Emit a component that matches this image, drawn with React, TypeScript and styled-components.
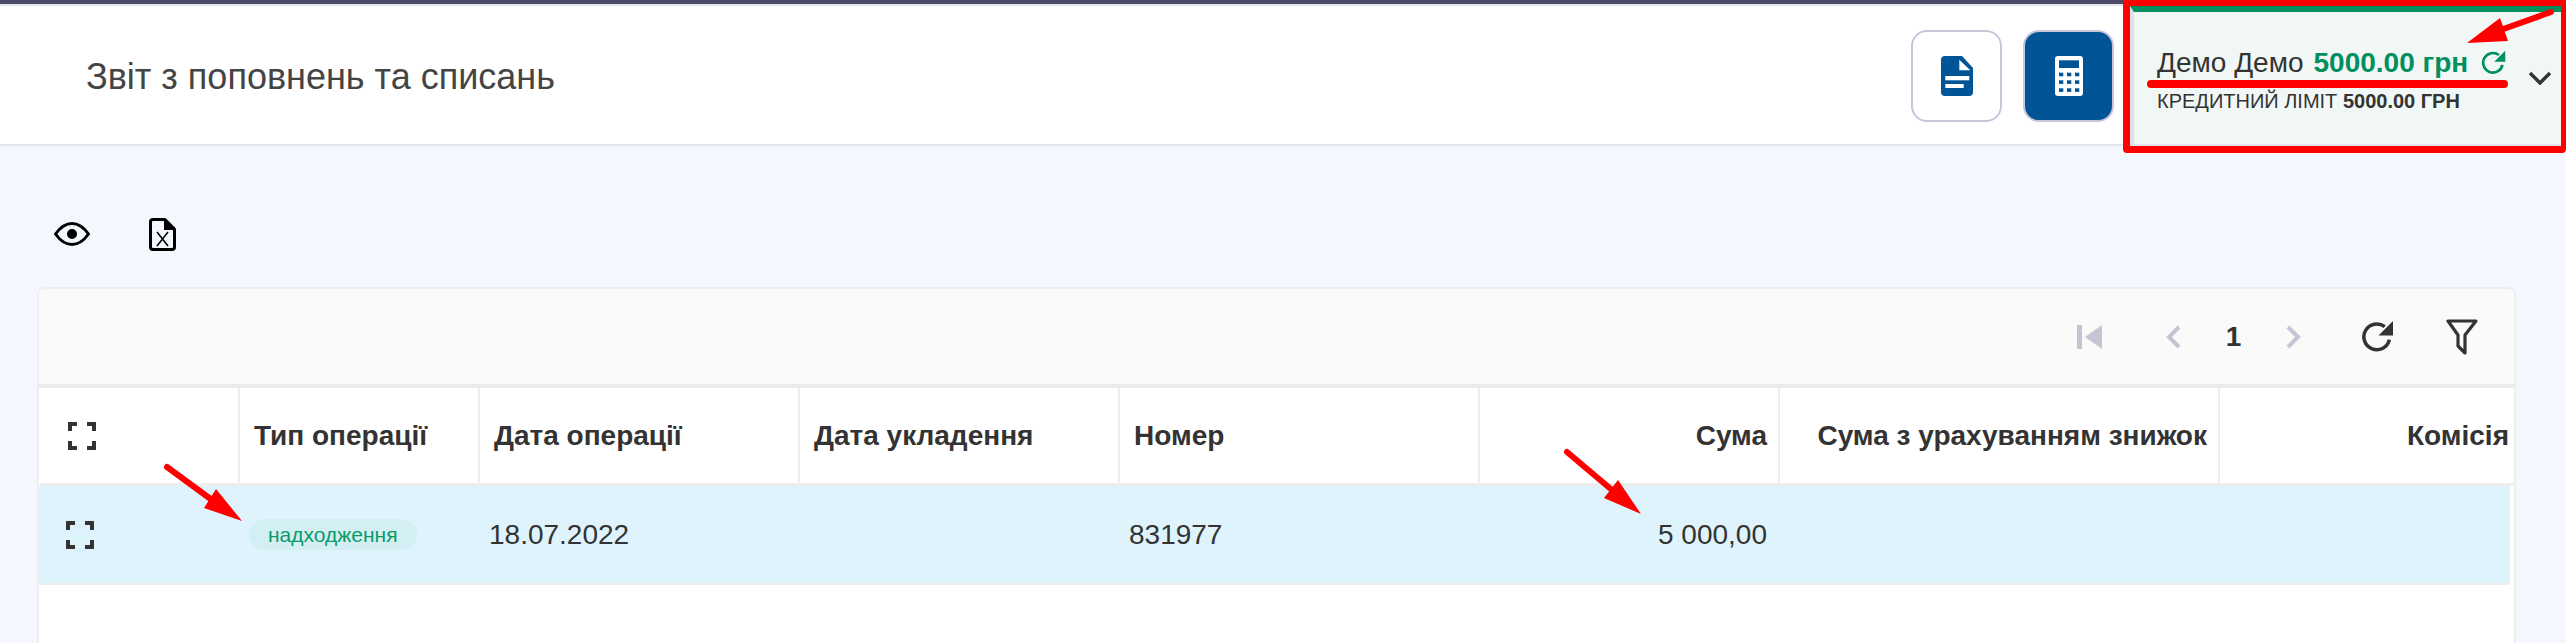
import styled, { createGlobalStyle } from "styled-components";

const GlobalStyle = createGlobalStyle`
  html, body {
    margin: 0;
    padding: 0;
    height: 100%;
    overflow: hidden;
    background: #f4f7fe;
    font-family: "Liberation Sans", Arial, sans-serif;
    color: #333;
  }
`;

const Page = styled.div`
  position: relative;
  width: 2566px;
  height: 643px;
  overflow: hidden;
  background: #f4f7fe;
`;

const TopStrip = styled.div`
  height: 4px;
  background: #4a4a68;
`;

const Header = styled.header`
  display: flex;
  align-items: stretch;
  height: 138px;
  background: #fff;
  border-top: 2px solid #e3e4ee;
  border-bottom: 2px solid #e3e4ee;
`;

const Title = styled.h1`
  margin: 0;
  flex: 1;
  padding: 3px 0 0 86px;
  align-self: center;
  font-size: 36px;
  font-weight: 400;
  color: #444;
`;

const HeaderButtons = styled.div`
  display: flex;
  align-items: flex-start;
  gap: 21px;
  padding-top: 24px;
  margin-right: 16px;
`;

const SquareButton = styled.button<{ $filled?: boolean }>`
  display: flex;
  align-items: center;
  justify-content: center;
  width: 91px;
  height: 92px;
  padding: 0;
  border: 2px solid #c5c8d8;
  border-radius: 16px;
  background: ${(p) => (p.$filled ? "#015596" : "#fff")};
`;

const UserPanel = styled.div`
  display: flex;
  flex-direction: column;
  width: 436px;
  box-sizing: border-box;
  background: #f1f7f5;
  border-top: 6px solid #008f5d;
  border-left: 4px solid #dfe1ea;
`;

const UserBody = styled.div`
  display: flex;
  align-items: center;
  flex: 1;
  padding: 3px 14px 0 23px;
  justify-content: space-between;

  > svg {
    margin-bottom: 3px;
  }
`;

const UserName = styled.div`
  display: flex;
  align-items: center;
  gap: 10px;
  font-size: 28px;
  color: #333;

  svg {
    margin-left: 3px;
  }
`;

const Balance = styled.span`
  font-weight: 700;
  color: #008f5d;
`;

const CreditLine = styled.div`
  margin-top: 11px;
  font-size: 20px;
  color: #333;

  b {
    font-weight: 700;
  }
`;

const Content = styled.main`
  padding: 35px 50px 0 37px;
`;

const ActionBar = styled.div`
  display: flex;
  align-items: center;
  gap: 59px;
  padding-left: 17px;
  height: 106px;
`;

const Card = styled.section`
  width: 2479px;
  height: 400px;
  box-sizing: border-box;
  background: #fff;
  border: 2px solid #eee;
  border-radius: 8px 8px 0 0;
`;

const Toolbar = styled.div`
  display: flex;
  align-items: center;
  justify-content: flex-end;
  height: 95px;
  padding-right: 36px;
  background: #fafafa;
  border-radius: 8px 8px 0 0;
  border-bottom: 4px solid #ebebeb;
`;

const PageNumber = styled.span`
  width: 105px;
  text-align: center;
  font-size: 28px;
  font-weight: 700;
  color: #333;
`;

const Pager = styled.div`
  display: flex;
  align-items: center;
`;

const ToolIcon = styled.span<{ $width: number; $left?: number }>`
  display: flex;
  justify-content: center;
  width: ${(p) => p.$width}px;
  margin-left: ${(p) => p.$left ?? 0}px;
`;

const HeadRow = styled.div`
  display: grid;
  grid-template-columns: 200px 240px 320px 320px 360px 300px 440px 292px;
  height: 95px;
  margin-left: 1px;
  border-bottom: 3px solid #ededed;
`;

const HeadCell = styled.div<{ $right?: boolean }>`
  display: flex;
  align-items: center;
  justify-content: ${(p) => (p.$right ? "flex-end" : "flex-start")};
  padding: 0 ${(p) => (p.$right ? "11px" : "0")} 0 ${(p) => (p.$right ? "0" : "14px")};
  border-right: 2px solid #eee;
  font-size: 28px;
  font-weight: 700;
  color: #333;
  white-space: nowrap;

  &:first-child {
    padding-left: 28px;
  }

  &:last-child {
    padding-right: 3px;
    border-right: none;
  }
`;

const DataRow = styled.div`
  display: grid;
  grid-template-columns: 201px 240px 320px 320px 360px 300px 440px 290px;
  height: 97px;
  width: 2471px;
  background: #dff3fd;
  border-bottom: 2px solid #eee;
`;

const DataCell = styled.div<{ $right?: boolean }>`
  display: flex;
  align-items: center;
  justify-content: ${(p) => (p.$right ? "flex-end" : "flex-start")};
  padding: 0 ${(p) => (p.$right ? "13px" : "0")} 0 ${(p) => (p.$right ? "0" : "9px")};
  font-size: 28px;
  color: #333;

  &:first-child {
    padding-left: 27px;
  }
`;

const Chip = styled.span`
  padding: 0 19px;
  height: 31px;
  line-height: 31px;
  border-radius: 16px;
  background: #d4eff3;
  color: #0a9a68;
  font-size: 21px;
`;

const RedFrame = styled.div`
  position: absolute;
  top: -1px;
  left: 2123px;
  width: 443px;
  height: 154px;
  box-sizing: border-box;
  border: 7px solid #ff0000;
  border-right-width: 5px;
  border-radius: 4px;
`;

const Marks = styled.svg`
  position: absolute;
  top: 0;
  left: 0;
  pointer-events: none;
`;

const DocIcon = () => (
  <svg width="32" height="40" viewBox="0 0 32 40">
    <path d="M4 0H21L32 12V36Q32 40 28 40H4Q0 40 0 36V4Q0 0 4 0Z" fill="#015596" />
    <path d="M18.3 3.7V14.3H29.3Z" fill="#fff" />
    <rect x="4.3" y="20" width="24" height="4.3" fill="#fff" />
    <rect x="4.3" y="28" width="18.4" height="4" fill="#fff" />
  </svg>
);

const CalcIcon = () => (
  <svg width="28" height="40" viewBox="0 0 28 40">
    <rect width="28" height="40" rx="3" fill="#fff" />
    <rect x="4" y="4.3" width="20" height="7.7" fill="#015596" />
    {[16.7, 24.3, 32.3].map((y) =>
      [4, 12, 20].map((x) => <rect key={`${x}-${y}`} x={x} y={y} width="4.3" height="3.6" fill="#015596" />)
    )}
  </svg>
);

const RefreshIcon = ({ size, color }: { size: number; color: string }) => (
  <svg width={size} height={size} viewBox="0 0 32 32">
    <path d="M27.5 19A12.5 12.5 0 1 1 23 6.5" fill="none" stroke={color} strokeWidth="3.4" />
    <path d="M31 1V15H17Z" fill={color} />
  </svg>
);

const Chevron = () => (
  <svg width="24" height="14" viewBox="0 0 24 14">
    <path d="M2 2L12 12L22 2" fill="none" stroke="#333" strokeWidth="3.4" />
  </svg>
);

const EyeIcon = () => (
  <svg width="36" height="24" viewBox="0 0 36 24">
    <path d="M1.5 12Q9 1.5 18 1.5T34.5 12Q27 22.5 18 22.5T1.5 12Z" fill="none" stroke="#000" strokeWidth="3" />
    <circle cx="18" cy="12" r="5" fill="#000" />
  </svg>
);

const FileXIcon = () => (
  <svg width="27" height="33" viewBox="0 0 27 33">
    <path
      d="M4 1.5H16L25.5 11V29Q25.5 31.5 23 31.5H4Q1.5 31.5 1.5 29V4Q1.5 1.5 4 1.5Z"
      fill="none"
      stroke="#000"
      strokeWidth="3"
      strokeLinejoin="round"
    />
    <path d="M15 1L26 12H15Z" fill="#000" />
    <path d="M8 14L19 28M19 14L8 28" stroke="#000" strokeWidth="1.6" fill="none" />
  </svg>
);

const ExpandIcon = () => (
  <svg width="28" height="28" viewBox="0 0 28 28">
    <path d="M2 9V2H9M19 2H26V9M26 19V26H19M9 26H2V19" fill="none" stroke="#333" strokeWidth="4" />
  </svg>
);

const FirstIcon = () => (
  <svg width="25" height="24" viewBox="0 0 25 24">
    <rect width="5" height="24" fill="#c3c5d5" />
    <path d="M25 0V24L8 12Z" fill="#c3c5d5" />
  </svg>
);

const ArrowIcon = ({ flip }: { flip?: boolean }) => (
  <svg width="15" height="24" viewBox="0 0 15 24">
    <path d={flip ? "M2 2L12 12L2 22" : "M13 2L3 12L13 22"} fill="none" stroke="#c3c5d5" strokeWidth="4" />
  </svg>
);

const FilterIcon = () => (
  <svg width="32" height="36" viewBox="0 0 32 36">
    <path d="M2 2H30L19 16V34L12 27V16Z" fill="none" stroke="#333" strokeWidth="3.2" strokeLinejoin="round" />
  </svg>
);

const headers = [
  { title: "Тип операції" },
  { title: "Дата операції" },
  { title: "Дата укладення" },
  { title: "Номер" },
  { title: "Сума", right: true },
  { title: "Сума з урахуванням знижок", right: true },
  { title: "Комісія", right: true },
];

export default function App() {
  return (
    <Page>
      <GlobalStyle />
      <TopStrip />
      <Header>
        <Title>Звіт з поповнень та списань</Title>
        <HeaderButtons>
          <SquareButton>
            <DocIcon />
          </SquareButton>
          <SquareButton $filled>
            <CalcIcon />
          </SquareButton>
        </HeaderButtons>
        <UserPanel>
          <UserBody>
            <div>
              <UserName>
                <span>Демо Демо</span>
                <Balance>5000.00 грн</Balance>
                <RefreshIcon size={25} color="#008f5d" />
              </UserName>
              <CreditLine>
                КРЕДИТНИЙ ЛІМІТ <b>5000.00 ГРН</b>
              </CreditLine>
            </div>
            <Chevron />
          </UserBody>
        </UserPanel>
      </Header>
      <Content>
        <ActionBar>
          <EyeIcon />
          <FileXIcon />
        </ActionBar>
        <Card>
          <Toolbar>
            <Pager>
              <FirstIcon />
              <ToolIcon $width={15} $left={64}>
                <ArrowIcon />
              </ToolIcon>
              <PageNumber>1</PageNumber>
              <ToolIcon $width={15}>
                <ArrowIcon flip />
              </ToolIcon>
              <ToolIcon $width={33} $left={60}>
                <RefreshIcon size={33} color="#333" />
              </ToolIcon>
              <ToolIcon $width={32} $left={52}>
                <FilterIcon />
              </ToolIcon>
            </Pager>
          </Toolbar>
          <HeadRow>
            <HeadCell>
              <ExpandIcon />
            </HeadCell>
            {headers.map((h) => (
              <HeadCell key={h.title} $right={h.right}>
                {h.title}
              </HeadCell>
            ))}
          </HeadRow>
          <DataRow>
            <DataCell>
              <ExpandIcon />
            </DataCell>
            <DataCell>
              <Chip>надходження</Chip>
            </DataCell>
            <DataCell>18.07.2022</DataCell>
            <DataCell />
            <DataCell>831977</DataCell>
            <DataCell $right>5 000,00</DataCell>
            <DataCell />
            <DataCell />
          </DataRow>
        </Card>
      </Content>
      <RedFrame />
      <Marks width="2566" height="643" viewBox="0 0 2566 643">
        <path d="M2151 84L2504 84" stroke="#f00" strokeWidth="8" strokeLinecap="round" />
        <path d="M2551 12L2495 32" stroke="#f00" strokeWidth="6" strokeLinecap="round" />
        <path d="M2467 43L2500 18L2508 41Z" fill="#f00" />
        <path d="M167 467L212 500" stroke="#f00" strokeWidth="6" strokeLinecap="round" />
        <path d="M242 521L216 489L204 508Z" fill="#f00" />
        <path d="M1567 452L1612 490" stroke="#f00" strokeWidth="6" strokeLinecap="round" />
        <path d="M1641 514L1618 480L1604 498Z" fill="#f00" />
      </Marks>
    </Page>
  );
}
